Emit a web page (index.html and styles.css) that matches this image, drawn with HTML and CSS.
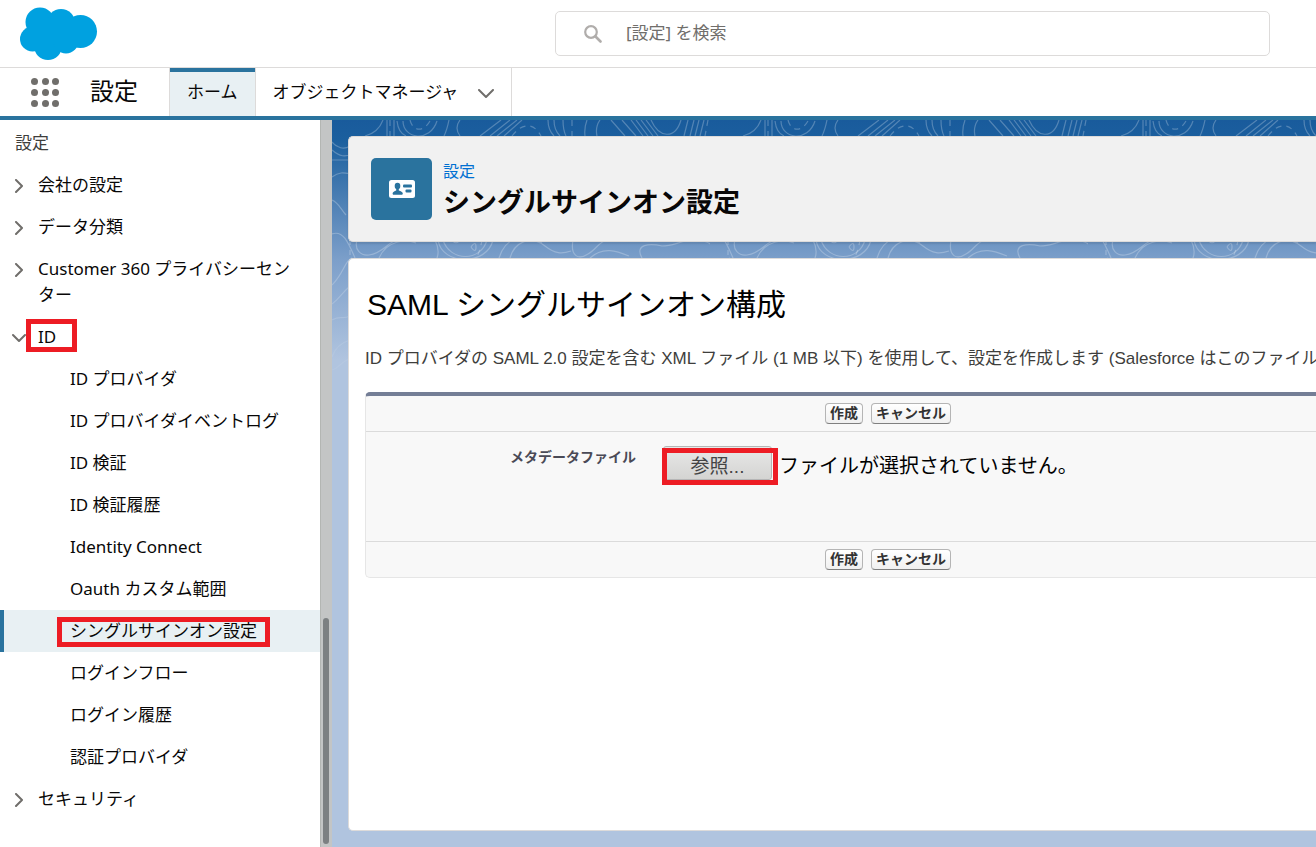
FILE: index.html
```html
<!DOCTYPE html>
<html lang="ja">
<head>
<meta charset="utf-8">
<meta name="viewport" content="width=device-width, initial-scale=1">
<title>シングルサインオン設定</title>
<link rel="stylesheet" href="styles.css">
</head>
<body>
<header class="global-header">
  <a class="logo" href="#" aria-label="Salesforce">
    <svg width="78" height="54" viewBox="0 0 78 54" fill="#00a1e0" aria-hidden="true">
      <circle cx="20" cy="15" r="14.500"/><circle cx="41" cy="16" r="14"/><circle cx="60.500" cy="24.500" r="16.500"/>
      <circle cx="12.500" cy="32" r="12.500"/><circle cx="28" cy="39" r="14"/><circle cx="46" cy="34" r="12.500"/>
      <path d="M14 15h46v22H14z"/>
    </svg>
  </a>
  <label class="search">
    <svg width="18" height="18" viewBox="0 0 18 18" fill="none" stroke="#b0adab" aria-hidden="true"><circle cx="7" cy="7" r="5.800" stroke-width="2.200"/><path d="M11.500 11.500l5 5" stroke-width="2.600" stroke-linecap="round"/></svg>
    <input type="search" placeholder="[設定] を検索" aria-label="[設定] を検索">
  </label>
</header>
<nav class="app-nav">
  <button class="launcher" type="button" aria-label="アプリケーションランチャー">
    <svg width="28" height="29" viewBox="0 0 28 29" fill="#706e6b" aria-hidden="true">
      <circle cx="3.500" cy="3.500" r="3.500"/><circle cx="14.500" cy="3.500" r="3.500"/><circle cx="24.500" cy="3.500" r="3.500"/>
      <circle cx="3.500" cy="14.500" r="3.500"/><circle cx="14.500" cy="14.500" r="3.500"/><circle cx="24.500" cy="14.500" r="3.500"/>
      <circle cx="3.500" cy="25.500" r="3.500"/><circle cx="14.500" cy="25.500" r="3.500"/><circle cx="24.500" cy="25.500" r="3.500"/>
    </svg>
  </button>
  <span class="app-name">設定</span>
  <a class="tab tab-active" href="#">ホーム</a>
  <div class="tab tab-menu">
    <a href="#">オブジェクトマネージャ</a>
    <button type="button" aria-label="メニューを開く"><svg width="16" height="10" viewBox="0 0 16 10" aria-hidden="true"><path class="chev" d="M1 1l7 7 7-7"/></svg></button>
  </div>
</nav>
<div class="workspace">
  <aside class="sidebar">
    <h2 class="side-title">設定</h2>
    <ul class="tree">
      <li><a href="#"><svg class="arrow" viewBox="0 0 14 14" aria-hidden="true"><path class="chev" d="M4 1l6 6-6 6"/></svg>会社の設定</a></li>
      <li><a href="#"><svg class="arrow" viewBox="0 0 14 14" aria-hidden="true"><path class="chev" d="M4 1l6 6-6 6"/></svg>データ分類</a></li>
      <li><a href="#"><svg class="arrow" viewBox="0 0 14 14" aria-hidden="true"><path class="chev" d="M4 1l6 6-6 6"/></svg>Customer 360 プライバシーセンター</a></li>
      <li><a href="#"><svg class="arrow" viewBox="0 0 14 14" aria-hidden="true"><path class="chev" d="M1 4l6 6 6-6"/></svg><span class="marked mark-id">ID</span></a>
        <ul class="subtree">
          <li><a href="#">ID プロバイダ</a></li>
          <li><a href="#">ID プロバイダイベントログ</a></li>
          <li><a href="#">ID 検証</a></li>
          <li><a href="#">ID 検証履歴</a></li>
          <li><a href="#">Identity Connect</a></li>
          <li><a href="#">Oauth カスタム範囲</a></li>
          <li class="selected"><a href="#" aria-current="page"><span class="marked mark-sso">シングルサインオン設定</span></a></li>
          <li><a href="#">ログインフロー</a></li>
          <li><a href="#">ログイン履歴</a></li>
          <li><a href="#">認証プロバイダ</a></li>
        </ul>
      </li>
      <li><a href="#"><svg class="arrow" viewBox="0 0 14 14" aria-hidden="true"><path class="chev" d="M4 1l6 6-6 6"/></svg>セキュリティ</a></li>
    </ul>
  </aside>
  <div class="scroll-track" aria-hidden="true"><div class="scroll-thumb"></div></div>
  <main class="content">
    <svg class="topo" aria-hidden="true">
      <defs>
        <pattern id="contours" width="378" height="280" patternUnits="userSpaceOnUse">
          <g fill="none" stroke="#fff" stroke-opacity=".25" stroke-width="1.200">
            <path d="M33 16c8-2 15-8 18-16M71 1c0 18 27 22 34 0M65 1c1 9 4 13 9 15M117 0q-2 10-5 16M128 0q-6 8 0 16M148 16L169 0M158 16L178 0M165 16L185 0M172 16L190 0M216 0q0 10 6 16M222 0q0 10 6 16M231 0q0 10 3 16M255 0q-3 8-2 16M268 0q-5 7-3 16M279 0l14 16M290 0l14 16M299 0l12 16M304 0l12 16M309 0l12 16M314 0l12 16M319 0c8 18 24 20 30 0M356 0l-4 16M362 0l-4 16M367 0l-4 16M372 0l-4 16M55 0v16M62 0v16"/>
            <path d="M78 0c3 12 14 12 20 1M180 16c9-12 21-15 29 0M240 0v16M58 0v16M376 0l-3 16" stroke-dasharray="6 5"/>
            <path d="M0 22c5 6 12 8 18 4M0 30c8 7 13 7 20 4M0 40h18M0 57c8-6 13-4 20-3M0 80c6 2 8 8 14 15M0 114c11-4 16 8 23 24M25 120c-3 10 4 16 12 15 15-2 19-14 29-15M47 138c8-18 27-19 37-15M103 120q5 10 2 18M111 120c7 22 38 22 44 0M106 120c4 26 49 26 55 0M167 138c6-20 25-27 43-15M178 138c4-15 20-24 35-12 10 8 17 8 26 5M241 120c-3 17 6 20 15 14 8-4 12-14 20-14M258 138c13-12 27-7 39-2M310 138c-8-14 8-15 20-12 13 0 18-6 35-6 15 1 20 9 24 18M121 119c0 5 6 5 6 0M139 127q5-7 5 0t-5 0"/>
            <path d="M150 120q-2 12-6 18M18 120v18" stroke-dasharray="5 5"/>
            <path d="M0 165c12-12 13-25 20-27M0 184c7-5 8-9 18-18M0 200c9-5 10 0 18-4M0 237c3-9 8-14 18-17M0 250c8-2 9-9 18-11"/>
          </g>
        </pattern>
        <linearGradient id="fade" x2="0" y2="1"><stop offset=".5" stop-color="#fff"/><stop offset="1" stop-color="#fff" stop-opacity="0"/></linearGradient>
        <mask id="fade-mask"><rect width="100%" height="100%" fill="url(#fade)"/></mask>
      </defs>
      <rect width="100%" height="100%" fill="url(#contours)" mask="url(#fade-mask)"/>
    </svg>
    <section class="page-header">
      <span class="page-icon">
        <svg width="26" height="18" viewBox="0 0 26 18" aria-hidden="true">
          <rect width="26" height="18" rx="2.500" fill="#fff"/>
          <g fill="#2a739e"><ellipse cx="8.500" cy="6" rx="2.800" ry="3.300"/><path d="M7.200 8h2.600v2.500c2 .800 4 1.500 4 3 0 1-.600 1.300-1.200 1.300H4.800c-.700 0-1.200-.400-1.200-1.300 0-1.500 2-2.200 3.600-3z"/><rect x="14" y="4.500" width="9" height="3" rx="1"/><rect x="16.500" y="9.500" width="6" height="3" rx="1"/></g>
        </svg>
      </span>
      <div>
        <a class="crumb" href="#">設定</a>
        <h1>シングルサインオン設定</h1>
      </div>
    </section>
    <section class="panel">
      <h2>SAML シングルサインオン構成</h2>
      <p class="intro">ID プロバイダの SAML 2.0 設定を含む XML ファイル (1 MB 以下) を使用して、設定を作成します (Salesforce はこのファイルを保存しません)。</p>
      <form class="editor">
        <div class="button-row"><button type="button">作成</button><button type="button">キャンセル</button></div>
        <div class="field-row">
          <label class="field-label" for="metadata">メタデータファイル</label>
          <div class="file-field">
            <input id="metadata" class="file-input" type="file">
            <label class="browse" for="metadata">参照...</label>
            <span class="file-status">ファイルが選択されていません。</span>
          </div>
        </div>
        <div class="button-row"><button type="button">作成</button><button type="button">キャンセル</button></div>
      </form>
    </section>
  </main>
</div>
</body>
</html>
```
FILE: styles.css
```css
* { box-sizing: border-box; }

body {
  margin: 0;
  min-height: 100vh;
  display: flex;
  flex-direction: column;
  overflow: hidden;
  background: #fff;
  color: #080707;
  font: 17px/26px "Noto Sans", "Noto Sans CJK JP", sans-serif;
}

a { color: inherit; text-decoration: none; }
button { font: inherit; color: inherit; cursor: pointer; }
h1, h2, p, ul { margin: 0; padding: 0; }
ul { list-style: none; }
svg { display: block; flex: none; }
.chev { fill: none; stroke: #706e6b; stroke-width: 2; stroke-linecap: round; stroke-linejoin: round; }

.global-header {
  height: 68px;
  padding: 0 46px 0 20px;
  display: flex;
  align-items: center;
  border-bottom: 1px solid #dddbda;
}
.search {
  margin-left: auto;
  width: 58%;
  max-width: 715px;
  height: 45px;
  padding: 0 28px;
  display: flex;
  align-items: center;
  gap: 24px;
  border: 1px solid #dddbda;
  border-radius: 5px;
}
.search input {
  flex: 1;
  border: 0;
  padding: 0 0 2px;
  outline: 0;
  background: none;
  font: inherit;
}
.search input::placeholder { color: #706e6b; opacity: 1; }

.app-nav {
  height: 52px;
  display: flex;
  border-bottom: 4px solid #2a739e;
}
.launcher {
  border: 0;
  background: none;
  padding: 0 31px;
  display: flex;
  align-items: center;
}
.app-name { width: 79px; font-size: 24px; line-height: 46px; }
.tab { padding: 0 17px; line-height: 47px; border-right: 1px solid #dddbda; }
.tab-active {
  background: #e8f0f3;
  border-left: 1px solid #dddbda;
  box-shadow: inset 0 4px #2a739e;
}
.tab-menu { display: flex; gap: 20px; }
.tab-menu button { border: 0; background: none; padding: 4px 0 0; display: flex; align-items: center; }

.workspace { flex: 1; display: flex; }
.sidebar { width: 320px; flex: none; }
.side-title { padding: 10px 15px 8px; font-size: 17px; font-weight: 400; color: #3e3e3c; }
.tree a { position: relative; display: block; padding: 8px 20px 8px 38px; }
.tree .subtree a { padding-left: 70px; }
.arrow { position: absolute; left: 12px; top: 15px; width: 14px; height: 14px; }
.selected { background: #e8f0f3; box-shadow: inset 4px 0 #2a739e; }

/* Red outlines over the highlighted controls */
.marked, .browse { position: relative; }
.marked::after, .browse::after { content: ""; position: absolute; border: 5px solid #ed1c24; }
.mark-id::after { inset: -6px -21px -4px -12px; }
.mark-sso::after { inset: -2px -13px -5px -13px; }
.browse::after { inset: 1px -7px -6px -2px; }

.scroll-track {
  width: 12px;
  flex: none;
  display: flex;
  align-items: flex-end;
  padding: 3px 2px;
  background: #c3c5c5;
  border-left: 1px solid #b3b6b3;
}
.scroll-thumb { width: 6px; height: 226px; border-radius: 3px; background: #7c8082; }

.content {
  position: relative;
  flex: 1;
  min-width: 0;
  display: flex;
  flex-direction: column;
  gap: 16px;
  padding: 16px 0 16px 16px;
  background: linear-gradient(#195b9c 0, #1b5f9e 20px, #7c9fca 140px, #b0c4df 240px);
}
.topo { position: absolute; left: 0; top: 0; width: 100%; height: 280px; }
.page-header, .panel { position: relative; border: 1px solid #dddbda; border-right: 0; border-radius: 5px 0 0 5px; box-shadow: 0 2px 2px rgba(0, 0, 0, .1); }
.page-header {
  height: 106px;
  padding: 21px 22px;
  display: flex;
  gap: 11px;
  background: #f1f1f1;
}
.page-icon {
  width: 61px;
  height: 62px;
  display: grid;
  place-items: center;
  border-radius: 5px;
  background: #2a739e;
}
.crumb { display: block; font-size: 16px; line-height: 26px; color: #0070d2; }
h1 { font-size: 27px; line-height: 35px; }

.panel {
  flex: 1;
  padding: 25px 0 0 16px;
  overflow: hidden;
  background: #fff;
  font-family: "Liberation Sans", "Noto Sans CJK JP", sans-serif;
  box-shadow: none;
}
.panel h2 { padding-left: 2px; font-size: 30px; line-height: 42px; font-weight: 400; color: #000; }
.intro { margin: 21px 0; font-size: 17px; line-height: 24px; white-space: nowrap; color: #3e3e3c; }
.editor {
  border: 1px solid #e6e6e6;
  border-top: 4px solid #747e96;
  border-right: 0;
  border-radius: 5px 0 0 5px;
  background: #f8f8f8;
}
.button-row { height: 35px; padding-left: 459px; display: flex; align-items: center; gap: 8px; }
.button-row button {
  height: 21px;
  padding: 0 4px;
  border: 1px solid #b5b5b5;
  border-bottom-color: #7f7f7f;
  border-radius: 4px;
  background: linear-gradient(#fff, #f0f0f0);
  font-size: 14px;
  font-weight: 700;
  line-height: 19px;
  color: #333;
}
.field-row {
  min-height: 111px;
  padding-top: 14px;
  display: flex;
  gap: 27px;
  border: solid #dbdbdb;
  border-width: 1px 0;
}
.field-label { width: 270px; font-size: 14px; line-height: 22px; font-weight: 700; color: #4a4a56; text-align: right; }
.file-field { position: relative; display: flex; align-items: flex-start; gap: 7px; font-size: 19px; line-height: 40px; color: #000; }
.file-status { font-size: 20px; }
.file-input { position: absolute; width: 1px; height: 1px; opacity: 0; }
.browse {
  width: 109px;
  height: 34px;
  border: 1px solid #b5b5b5;
  border-radius: 3px;
  background: linear-gradient(#e8e8e8, #d4d4d2);
  text-align: center;
  color: #444;
}
```
